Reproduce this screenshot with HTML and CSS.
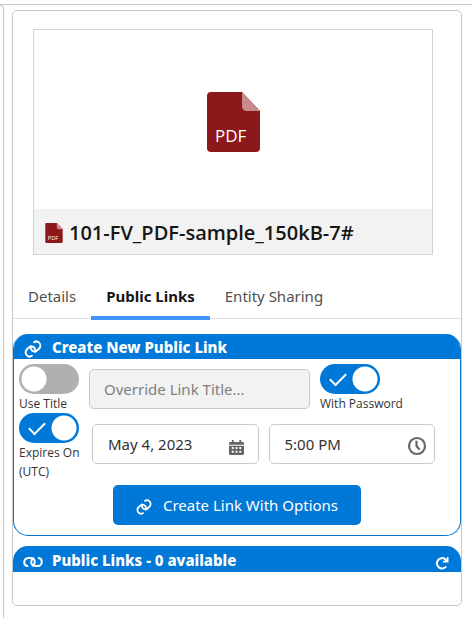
FILE: index.html
```html
<!DOCTYPE html>
<html lang="en">
<head>
<meta charset="utf-8">
<meta name="viewport" content="width=device-width, initial-scale=1">
<title>Public Links</title>
<link rel="stylesheet" href="styles.css">
</head>
<body>
<svg class="defs" aria-hidden="true">
  <symbol id="chain" viewBox="0 0 20 20">
    <g fill="none" stroke="currentColor" stroke-width="2" stroke-linecap="round">
      <path d="M4.4 14C2.400 13.600 1.200 12 1.200 10.200C1.200 7.900 3 6 5.200 6H7.600C10 6 11.800 7.700 11.800 10C11.800 11.500 11 12.900 9.600 13.600"/>
      <path d="M15.600 6C17.600 6.400 18.800 8 18.800 9.800C18.800 12.100 17 14 14.800 14H12.400C10 14 8.200 12.300 8.200 10C8.200 8.500 9 7.100 10.400 6.400"/>
    </g>
  </symbol>
  <symbol id="sheet" viewBox="0 0 53 60">
    <path fill="#8c181a" d="M4 0H35L53 19V56Q53 60 49 60H4Q0 60 0 56V4Q0 0 4 0Z"/>
    <path fill="#c68b8c" d="M35 0L53 19H40Q35 19 35 14Z"/>
  </symbol>
</svg>
<div class="page">
  <aside class="side"></aside>
  <main class="card">
    <section class="preview">
      <div class="thumb"><svg class="pdf-large" viewBox="0 0 53 60" role="img" aria-label="PDF"><use href="#sheet"/><text class="pdf-text" x="8" y="50">PDF</text></svg></div>
      <div class="file"><svg class="pdf-small" viewBox="0 0 53 60" aria-hidden="true"><use href="#sheet"/><text class="pdf-text" x="8" y="50">PDF</text></svg><h1 class="file-name">101-FV_PDF-sample_150kB-7#</h1></div>
    </section>
    <nav class="tabs">
      <a class="tab" href="#details">Details</a>
      <a class="tab active" href="#links">Public Links</a>
      <a class="tab" href="#sharing">Entity Sharing</a>
    </nav>
    <form class="panel">
      <h2 class="bar"><svg class="chain tilt" aria-hidden="true"><use href="#chain"/></svg>Create New Public Link</h2>
      <div class="row">
        <label class="switch"><input type="checkbox"><span>Use Title</span></label>
        <input class="box title" type="text" placeholder="Override Link Title..." aria-label="Override link title" disabled>
        <label class="switch wide"><input type="checkbox" checked><span>With Password</span></label>
      </div>
      <div class="row dates">
        <label class="switch"><input type="checkbox" checked><span>Expires On (UTC)</span></label>
        <div class="box field">
          <input class="value" type="text" value="May 4, 2023" aria-label="Expiry date">
          <button class="pick" type="button" aria-label="Choose date">
            <svg class="calendar" viewBox="0 0 16 16" fill="currentColor" aria-hidden="true"><path fill-rule="evenodd" d="M3 0H5V2H11V0H13V2H15L16 3V5H0V3L1 2H3ZM0 6H16V15L15 16H1L0 15ZM3 7.500V9.500H5V7.500ZM7 7.500V9.500H9V7.500ZM11 7.500V9.500H13V7.500ZM3 11.500V13.500H5V11.500ZM7 11.500V13.500H9V11.500ZM11 11.500V13.500H13V11.500Z"/></svg>
          </button>
        </div>
        <div class="box field">
          <input class="value" type="text" value="5:00 PM" aria-label="Expiry time">
          <button class="pick" type="button" aria-label="Choose time">
            <svg class="clock" viewBox="0 0 20 20" fill="none" stroke="currentColor" stroke-width="2.200" aria-hidden="true"><circle cx="10" cy="10" r="8"/><path d="M9.500 4.800V10L12.600 13.600"/></svg>
          </button>
        </div>
      </div>
      <button class="create" type="button"><svg class="chain tilt" aria-hidden="true"><use href="#chain"/></svg>Create Link With Options</button>
    </form>
    <section class="links">
      <h2 class="bar"><svg class="chain" aria-hidden="true"><use href="#chain"/></svg>Public Links - 0 available
        <button class="refresh" type="button" aria-label="Refresh"><svg viewBox="0 0 14 14" aria-hidden="true"><path fill="none" stroke="currentColor" stroke-width="2" d="M11.200 10.500A5.200 5.200 0 1 1 10.300 3.200L12 5"/><path fill="currentColor" d="M13.500 1V6.500H8V4.800H11.800V1Z"/></svg></button>
      </h2>
    </section>
  </main>
</div>
</body>
</html>
```
FILE: styles.css
```css
* { box-sizing: border-box; }
body {
  margin: 0;
  background: #fff;
  color: #242424;
  font-family: "Noto Sans", "Open Sans", sans-serif;
  font-size: 15px;
}
.defs { position: absolute; width: 0; height: 0; }
.page {
  display: flex;
  gap: 8px;
  min-height: calc(100vh - 4px);
  margin-top: 4px;
  padding-right: 10px;
  border-top: 1px solid #c8c8c8;
}
.side {
  width: 4px;
  border: 1px solid #c8c8c8;
  border-width: 1px 1px 0 0;
  border-radius: 0 4px 0 0;
}
.card {
  flex: 1;
  min-width: 0;
  align-self: flex-start;
  margin-top: 5px;
  padding: 18px 0 33px;
  border: 1px solid #c8c8c8;
  border-radius: 5px;
}
.preview { margin: 0 28px 0 20px; border: 1px solid #d3d3d3; }
.thumb { display: flex; align-items: center; justify-content: center; height: 179px; padding-top: 4px; }
.pdf-large { width: 53px; height: 60px; }
.pdf-text { fill: #fff; font: 17px "Open Sans", sans-serif; }
.file { display: flex; align-items: center; gap: 6px; height: 45px; padding: 2px 11px 0; background: #f2f2f2; }
.pdf-small { width: 18px; height: 20px; }
.file-name { margin: 0; color: #161616; font-family: "Open Sans", sans-serif; font-size: 20px; font-weight: 600; line-height: 28px; white-space: nowrap; }
.tabs { display: flex; height: 64px; padding-top: 18px; border-bottom: 1px solid #e1e1e1; }
.tab { height: 47px; padding: 0 15px; color: #505050; line-height: 46px; text-decoration: none; white-space: nowrap; }
.active { border-bottom: 4px solid #4094ff; color: #161616; font-weight: 700; }
.panel { display: flex; flex-direction: column; margin-top: 15px; padding-bottom: 10px; border: 1px solid #0176d3; border-top: 0; border-radius: 15px; overflow: hidden; }
.bar { display: flex; align-items: center; gap: 9px; margin: 0; height: 25px; padding: 1px 11px 0 9px; background: #0078d7; color: #fff; font-size: 15px; font-weight: 800; line-height: 24px; }
.chain { width: 20px; height: 20px; flex: none; }
.bar .chain { margin-top: 4px; }
.tilt { transform: rotate(-45deg); }
.row { display: flex; align-items: flex-start; padding: 5px 0 0 5px; }
.switch { width: 70px; flex: none; color: #333; font: 12px/19px "Open Sans", sans-serif; }
.switch span { display: block; }
.switch.wide { width: 110px; margin-left: 10px; }
.switch input {
  display: block;
  width: 60px;
  height: 30px;
  margin: 0;
  border-radius: 15px;
  appearance: none;
  background: radial-gradient(circle at 15px 15px, #fff 12px, transparent 13px) #b0b0b0;
}
.switch input:checked { background: radial-gradient(circle at 45px 15px, #fff 12px, transparent 13px) #0078d7; }
.switch input:checked::before {
  content: "";
  display: block;
  width: 14px;
  height: 7px;
  margin: 9px 0 0 10px;
  border: 2px solid #fff;
  border-width: 0 0 2px 2px;
  transform: rotate(-45deg);
}
.box { height: 40px; border: 1px solid #c8c8c8; border-radius: 5px; background: #fff; font: 15px "Noto Sans", "Open Sans", sans-serif; }
.title { flex: 1; min-width: 0; margin-top: 5px; padding: 0 14px; background: #f2f2f2; }
.title::placeholder { color: #808080; opacity: 1; }
.row:not(.dates) { padding-right: 30px; }
.dates { padding: 0 25px 0 5px; }
.field { display: flex; flex: 1; align-items: center; min-width: 0; margin: 11px 0 0 3px; padding: 0 7px 0 15px; }
.field + .field { margin-left: 10px; }
.value { flex: 1; width: 0; min-width: 0; padding: 0; border: 0; background: none; color: #333; font: 15px "Noto Sans", "Open Sans", sans-serif; }
.pick, .refresh { display: flex; padding: 0; border: 0; background: none; color: #666; }
.pick { padding-top: 4px; }
.calendar { width: 15px; height: 15px; margin: 2px 7px 0 0; }
.clock { width: 20px; height: 20px; }
.create { display: flex; align-items: center; align-self: center; gap: 10px; height: 40px; margin-top: 4px; padding: 0 23px 0 22px; border: 0; border-radius: 5px; background: #0078d7; color: #fff; font: 15px "Noto Sans", "Open Sans", sans-serif; }
.create .chain { width: 18px; height: 18px; margin-top: 4px; }
.links { margin-top: 10px; }
.links .bar { height: 26px; padding: 1px 12px 0 10px; border-radius: 15px 15px 0 0; }
.refresh { width: 14px; height: 14px; margin: 7px 0 0 auto; color: #fff; }
```
